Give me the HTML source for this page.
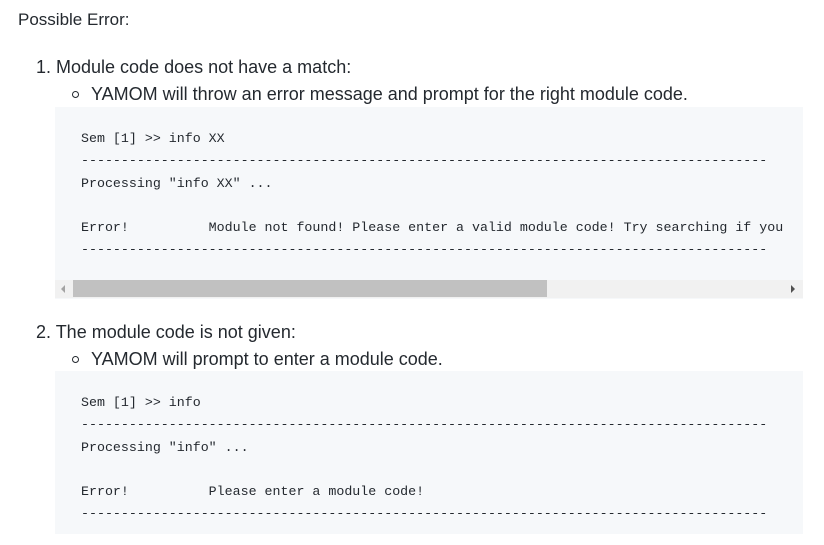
<!DOCTYPE html>
<html><head><style>
body{margin:0;width:824px;height:545px;background:#fff;position:relative;overflow:hidden;font-family:"Liberation Sans",sans-serif;color:#24292f;}
.t{position:absolute;font-size:18px;white-space:nowrap;line-height:20px}
.blk{position:absolute;left:55px;width:748px;background:#f6f8fa}
.code{position:absolute;left:81px;font-family:"Liberation Mono",monospace;font-size:13.3px;line-height:22.3px;white-space:pre;color:#24292f;margin:0}
.bul{position:absolute;width:5px;height:5px;border:1.3px solid #24292f;border-radius:50%}
</style></head><body>
<div class="t" style="left:18px;top:10px;font-size:17px">Possible Error:</div>
<div class="t" style="left:36px;top:57px">1. Module code does not have a match:</div>
<div class="bul" style="left:72px;top:91px"></div>
<div class="t" style="left:91px;top:84px">YAMOM will throw an error message and prompt for the right module code.</div>
<div class="blk" style="top:107px;height:192px;overflow:hidden">
<div style="position:absolute;left:0;top:173px;width:748px;height:18px;background:#f1f1f1"></div>
<div style="position:absolute;left:18px;top:173px;width:474px;height:17px;background:#c1c1c1"></div>
<div style="position:absolute;left:6px;top:178px;width:0;height:0;border-top:4px solid transparent;border-bottom:4px solid transparent;border-right:4px solid #a3a3a3"></div>
<div style="position:absolute;left:736px;top:178px;width:0;height:0;border-top:4px solid transparent;border-bottom:4px solid transparent;border-left:4px solid #505050"></div>
</div>
<pre class="code" style="top:128px;width:735px;overflow:hidden">Sem [1] &gt;&gt; info XX
--------------------------------------------------------------------------------------
Processing "info XX" ...

Error!          Module not found! Please enter a valid module code! Try searching if you
--------------------------------------------------------------------------------------</pre>
<div class="t" style="left:36px;top:322px">2. The module code is not given:</div>
<div class="bul" style="left:72px;top:356px"></div>
<div class="t" style="left:91px;top:349px">YAMOM will prompt to enter a module code.</div>
<div class="blk" style="top:371px;height:163px"></div>
<pre class="code" style="top:392px">Sem [1] &gt;&gt; info
--------------------------------------------------------------------------------------
Processing "info" ...

Error!          Please enter a module code!
--------------------------------------------------------------------------------------</pre>
</body></html>
